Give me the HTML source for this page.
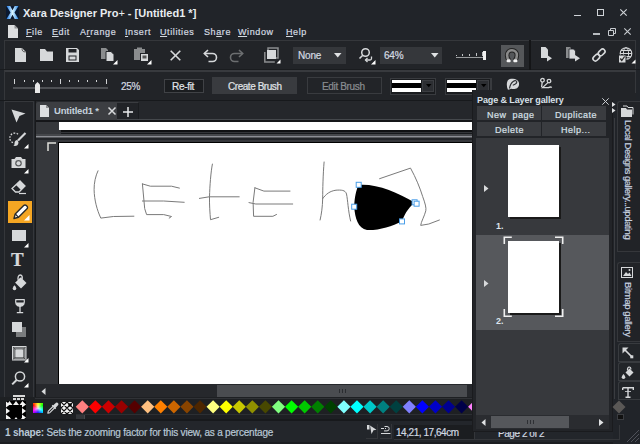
<!DOCTYPE html>
<html><head><meta charset="utf-8">
<style>
*{margin:0;padding:0;box-sizing:border-box}
html,body{width:640px;height:444px;overflow:hidden;background:#212429;font-family:"Liberation Sans",sans-serif;color:#c9d1da}
.a{position:absolute}
.t{position:absolute;white-space:nowrap;line-height:1;-webkit-text-stroke:0.2px currentColor}
.nb{-webkit-text-stroke:0}
b{-webkit-text-stroke:0}
svg{position:absolute;overflow:visible}
</style></head><body>
<svg style="left:6px;top:6px" width="13" height="13" viewBox="0 0 13 13">
<defs><linearGradient id="xg" x1="0" y1="0" x2="1" y2="0"><stop offset="0" stop-color="#1a78e8"/><stop offset="0.5" stop-color="#d8f4ff"/><stop offset="1" stop-color="#2a88e8"/></linearGradient></defs>
<rect x="0" y="0" width="13" height="13" fill="#0a1830"/>
<path d="M0.5 0h3.8l2.2 4.2 2.2-4.2h3.8l-4 6.5 4 6.5h-3.8l-2.2-4.2-2.2 4.2h-3.8l4-6.5z" fill="url(#xg)"/></svg>
<div class="t nb" style="left:23px;top:8px;font-size:11px;font-weight:bold;color:#e8ecf0">Xara Designer Pro<span style="font-weight:normal">+</span> - [Untitled1 *]</div>
<div class="a" style="left:574px;top:15px;width:7px;height:1px;background:#d0d4d8"></div>
<div class="a" style="left:597px;top:9px;width:7px;height:7px;border:1px solid #d0d4d8"></div>
<svg style="left:620px;top:9px" width="7" height="7"><path d="M0.3 0.3L6.7 6.7M6.7 0.3L0.3 6.7" stroke="#d0d4d8" stroke-width="1.1"/></svg>
<svg style="left:8px;top:25px" width="10" height="13" viewBox="0 0 10 13"><path d="M0 0h6.5l3.5 3.5v9.5h-10z" fill="#dcdee0"/><path d="M6.5 0v3.5h3.5z" fill="#8e9092"/></svg><div class="t" style="left:26px;top:28px;font-size:9px;letter-spacing:0.6px;color:#d4dae0"><u>F</u>ile</div><div class="t" style="left:52px;top:28px;font-size:9px;letter-spacing:0.6px;color:#d4dae0"><u>E</u>dit</div><div class="t" style="left:80px;top:28px;font-size:9px;letter-spacing:0.6px;color:#d4dae0">A<u>r</u>range</div><div class="t" style="left:125px;top:28px;font-size:9px;letter-spacing:0.6px;color:#d4dae0"><u>I</u>nsert</div><div class="t" style="left:160px;top:28px;font-size:9px;letter-spacing:0.6px;color:#d4dae0"><u>U</u>tilities</div><div class="t" style="left:204px;top:28px;font-size:9px;letter-spacing:0.6px;color:#d4dae0">Sh<u>a</u>re</div><div class="t" style="left:238px;top:28px;font-size:9px;letter-spacing:0.6px;color:#d4dae0"><u>W</u>indow</div><div class="t" style="left:286px;top:28px;font-size:9px;letter-spacing:0.6px;color:#d4dae0"><u>H</u>elp</div><div class="a" style="left:593px;top:33px;width:7px;height:2px;background:#b8bcc0"></div>
<svg style="left:608px;top:28px" width="8" height="8"><path d="M2.5 2.5v-2h5v5h-2M0.5 2.5h5v5h-5z" fill="none" stroke="#c8ccd0" stroke-width="1"/></svg>
<svg style="left:624px;top:28px" width="7" height="7"><path d="M0.3 0.3L6.7 6.7M6.7 0.3L0.3 6.7" stroke="#c8ccd0" stroke-width="1.1"/></svg>
<div class="a" style="left:4px;top:40px;width:527px;height:29px;background:#222428;border:1px solid #35373b;border-bottom:none"></div><div class="a" style="left:530px;top:40px;width:106px;height:29px;background:#222428;border:1px solid #35373b;border-bottom:none"></div><div class="a" style="left:0;top:69px;width:640px;height:1px;background:#1a1c1f"></div><svg style="left:15px;top:48px" width="11" height="14" viewBox="0 0 11 14"><path d="M0 0h7l4 4v10h-11z" fill="#d6d8da"/><path d="M7 0.3c0 2 0.5 3.7 3.7 3.7" fill="none" stroke="#555" stroke-width="1"/></svg><svg style="left:40px;top:49px" width="13" height="12" viewBox="0 0 13 12"><path d="M0 0h5l2 2.5h6v9.5h-13z" fill="#d6d8da"/></svg><svg style="left:66px;top:48px" width="13" height="14" viewBox="0 0 13 14"><path d="M0 0h11l2 2v12h-13z" fill="#d6d8da"/><rect x="2.5" y="1" width="8" height="3.5" fill="#222428"/><rect x="2.5" y="7.5" width="8" height="5" fill="#222428"/><rect x="3.5" y="8.5" width="6" height="3" fill="#d6d8da"/></svg><svg style="left:101px;top:48px" width="17" height="17" viewBox="0 0 17 17"><path d="M0 0h5l2 2v9h-7z" fill="#8a8c8e"/><path d="M5 3.5h5l3 3v7h-8z" fill="#d6d8da" stroke="#222428" stroke-width="1"/><path d="M16.5 12v4.5h-4.5z" fill="#fff"/></svg><svg style="left:134px;top:47px" width="18" height="18" viewBox="0 0 18 18"><path d="M0 2h3v-1.5h5v1.5h3v11h-11z" fill="#8a8c8e"/><rect x="6.5" y="6.5" width="8" height="8" fill="#d6d8da" stroke="#222428" stroke-width="1"/><rect x="8.5" y="8.5" width="4" height="3" fill="#555"/><path d="M17.5 13v4.5h-4.5z" fill="#fff"/></svg><svg style="left:170px;top:50px" width="11" height="11"><path d="M0.7 0.7L10.3 10.3M10.3 0.7L0.7 10.3" stroke="#d6d8da" stroke-width="1.6"/></svg><svg style="left:203px;top:49px" width="15" height="13" viewBox="0 0 15 13"><path d="M1.5 4.5h8a4 4 0 0 1 0 8h-4" fill="none" stroke="#d6d8da" stroke-width="1.6"/><path d="M5 1L1.3 4.5 5 8" fill="none" stroke="#d6d8da" stroke-width="1.6"/></svg><svg style="left:229px;top:49px" width="15" height="13" viewBox="0 0 15 13"><path d="M13.5 4.5h-8a4 4 0 0 0 0 8h4" fill="none" stroke="#6c6e70" stroke-width="1.6"/><path d="M10 1L13.7 4.5 10 8" fill="none" stroke="#6c6e70" stroke-width="1.6"/></svg><svg style="left:264px;top:47px" width="17" height="17" viewBox="0 0 17 17"><path d="M4 4v-3h10v10h-3" fill="none" stroke="#8a8c8e" stroke-width="1.5"/><path d="M0.8 5v10h10" fill="none" stroke="#8a8c8e" stroke-width="1.5"/><rect x="3" y="3" width="9" height="9" fill="#d6d8da"/><path d="M16.5 12.5v4h-4z" fill="#fff"/></svg><div class="a" style="left:293px;top:47px;width:53px;height:17px;background:#35373b"></div><div class="t" style="left:298px;top:51px;font-size:10px;letter-spacing:-0.2px;color:#d4dae0">None</div><svg style="left:334px;top:53px" width="8" height="5"><path d="M0 0h7.5l-3.75 4.5z" fill="#e0e2e4"/></svg><svg style="left:358px;top:47px" width="18" height="18" viewBox="0 0 18 18"><circle cx="7.5" cy="5.5" r="3.8" fill="none" stroke="#d6d8da" stroke-width="1.5"/><path d="M4.8 8.2L1.5 11.5" stroke="#d6d8da" stroke-width="1.6"/><path d="M13.5 9.5v2a1.5 1.5 0 0 1-1.5 1.5h-4.5" fill="none" stroke="#d6d8da" stroke-width="1.3"/><path d="M9.5 11l-2 2 2 2" fill="none" stroke="#d6d8da" stroke-width="1.3"/><path d="M17.5 13v4.5h-4.5z" fill="#fff"/></svg><div class="a" style="left:380px;top:47px;width:62px;height:17px;background:#35373b"></div><div class="t" style="left:384px;top:51px;font-size:10px;letter-spacing:-0.2px;color:#d4dae0">64%</div><svg style="left:431px;top:53px" width="8" height="5"><path d="M0 0h7.5l-3.75 4.5z" fill="#e0e2e4"/></svg><div class="a" style="left:456px;top:57px;width:29px;height:1px;background:#9a9c9e"></div><div class="a" style="left:456px;top:55px;width:1px;height:1px;background:#c0c2c4"></div><div class="a" style="left:462px;top:54px;width:1px;height:2px;background:#c0c2c4"></div><div class="a" style="left:469px;top:54px;width:1px;height:2px;background:#c0c2c4"></div><div class="a" style="left:476px;top:53px;width:1px;height:3px;background:#c0c2c4"></div><div class="a" style="left:482px;top:52px;width:1px;height:4px;background:#c0c2c4"></div><div class="a" style="left:483px;top:51px;width:3px;height:9px;background:#f0f0f0"></div><div class="a" style="left:501px;top:45px;width:23px;height:22px;background:#55575a"></div><svg style="left:505px;top:48px" width="14" height="16" viewBox="0 0 14 16"><path d="M4.3 12.8C2.6 11 2.1 9.3 2.1 7.2A4.9 4.9 0 0 1 11.9 7.2C11.9 9.3 11.4 11 9.7 12.8" fill="none" stroke="#222" stroke-width="4.6"/><path d="M4.3 12.5C2.6 11 2.1 9.3 2.1 7.2A4.9 4.9 0 0 1 11.9 7.2C11.9 9.3 11.4 11 9.7 12.5" fill="none" stroke="#8a8a8a" stroke-width="2.6"/><rect x="1.6" y="11.6" width="4" height="2.6" rx="0.8" fill="#f4f4f4"/><rect x="8.4" y="11.6" width="4" height="2.6" rx="0.8" fill="#f4f4f4"/></svg><div class="a" style="left:529px;top:40px;width:2px;height:30px;background:#141517"></div><svg style="left:541px;top:47px" width="12" height="15" viewBox="0 0 12 15"><path d="M0 0h4.5l2.5 2.5v8.5h-7z" fill="#d6d8da"/><path d="M6 8l5 3.2-5 3.2z" fill="#d6d8da"/></svg><svg style="left:566px;top:47px" width="15" height="15" viewBox="0 0 15 15"><path d="M0 0h4l1 1v10h-5z" fill="#8a8c8e"/><path d="M3 2h4.5l2 2v8h-6.5z" fill="#d6d8da" stroke="#222428" stroke-width="0.8"/><path d="M9 8l5 3.2-5 3.2z" fill="#d6d8da"/></svg><svg style="left:592px;top:48px" width="14" height="14" viewBox="0 0 14 14"><g transform="rotate(-45 7 7)" fill="none" stroke="#d6d8da" stroke-width="1.6"><rect x="-0.5" y="4.6" width="7.5" height="4.8" rx="2.4"/><rect x="7" y="4.6" width="7.5" height="4.8" rx="2.4"/></g></svg><svg style="left:618px;top:47px" width="18" height="17" viewBox="0 0 18 17"><circle cx="8" cy="6.5" r="5.8" fill="none" stroke="#d6d8da" stroke-width="1.1"/><ellipse cx="8" cy="6.5" rx="2.6" ry="5.8" fill="none" stroke="#d6d8da" stroke-width="1"/><path d="M2.2 6.5h11.6M3 3.5h10M3 9.5h10" stroke="#d6d8da" stroke-width="1"/><rect x="0.5" y="8" width="7.5" height="8" fill="#d6d8da" stroke="#222428" stroke-width="1"/><path d="M2.3 11.5l1.5 2 2.8-4" fill="none" stroke="#222" stroke-width="1.3"/><path d="M17.5 12.5v4h-4z" fill="#fff"/></svg><div class="a" style="left:4px;top:70px;width:632px;height:30px;background:#222428;border:1px solid #35373b;border-top:2px solid #383a3e;border-bottom:none;border-right:none"></div><div class="a" style="left:635px;top:72px;width:1px;height:21px;background:#35373b"></div><div class="a" style="left:13px;top:87px;width:95px;height:2px;background:#4e5054"></div><div class="a" style="left:14px;top:79px;width:1px;height:5px;background:#d0d2d4"></div><div class="a" style="left:24px;top:80px;width:1px;height:2px;background:#d0d2d4"></div><div class="a" style="left:33px;top:80px;width:1px;height:2px;background:#d0d2d4"></div><div class="a" style="left:42px;top:80px;width:1px;height:2px;background:#d0d2d4"></div><div class="a" style="left:51px;top:80px;width:1px;height:2px;background:#d0d2d4"></div><div class="a" style="left:60px;top:79px;width:1px;height:5px;background:#d0d2d4"></div><div class="a" style="left:69px;top:80px;width:1px;height:2px;background:#d0d2d4"></div><div class="a" style="left:78px;top:80px;width:1px;height:2px;background:#d0d2d4"></div><div class="a" style="left:87px;top:80px;width:1px;height:2px;background:#d0d2d4"></div><div class="a" style="left:96px;top:80px;width:1px;height:2px;background:#d0d2d4"></div><div class="a" style="left:106px;top:79px;width:1px;height:5px;background:#d0d2d4"></div><svg style="left:35px;top:82px" width="5" height="11" viewBox="0 0 5 11"><path d="M0 2.5L2.5 0 5 2.5v8.5h-5z" fill="#e8e8e8"/></svg><div class="t" style="left:121px;top:82px;font-size:10px;letter-spacing:-0.3px;color:#d4dae0">25%</div><div class="a" style="left:164px;top:79px;width:40px;height:14px;background:#1b1d20;border:1px solid #404246"></div><div class="t" style="left:172px;top:82px;font-size:10px;letter-spacing:-0.3px;color:#e0e4e8">Re-fit</div><div class="a" style="left:212px;top:77px;width:85px;height:17px;background:#393b3f"></div><div class="t" style="left:228px;top:82px;font-size:10px;letter-spacing:-0.45px;color:#e0e4e8">Create Brush</div><div class="a" style="left:307px;top:77px;width:75px;height:17px;border:1px solid #393b3f"></div><div class="t" style="left:322px;top:82px;font-size:10px;letter-spacing:-0.35px;color:#8a8e92">Edit Brush</div><div class="a" style="left:390px;top:78px;width:46px;height:17px;background:#1a1c1f;border:1px solid #393b3f"></div><div class="a" style="left:392px;top:80px;width:29px;height:12px;background:#fff"></div><div class="a" style="left:392px;top:83px;width:29px;height:5px;background:#000"></div><div class="a" style="left:422px;top:80px;width:12px;height:12px;background:#2c2e32;border:1px solid #3c3e42"></div><svg style="left:426px;top:84px" width="6" height="4"><path d="M0 0h5.5l-2.75 3.2z" fill="#000"/></svg><div class="a" style="left:445px;top:78px;width:46px;height:17px;background:#1a1c1f;border:1px solid #393b3f"></div><div class="a" style="left:447px;top:80px;width:29px;height:12px;background:#fff"></div><div class="a" style="left:447px;top:83px;width:29px;height:5px;background:#000"></div><div class="a" style="left:477px;top:80px;width:12px;height:12px;background:#2c2e32;border:1px solid #3c3e42"></div><svg style="left:481px;top:84px" width="6" height="4"><path d="M0 0h5.5l-2.75 3.2z" fill="#000"/></svg><div class="a" style="left:491px;top:78px;width:1px;height:16px;background:#393b3f"></div><svg style="left:506px;top:78px" width="14" height="12" viewBox="0 0 14 12"><path d="M1.5 3C2.5 1 5 0.5 7 0.7c2.5 0.2 5 1.3 5.8 3.5 0.6 2 0.3 4.5-1.5 5.8-1.5 1-4 1.2-6 0.8-1 0.6-2.5 1-3.5 0.8C0.8 9 0.3 5.5 1.5 3z" fill="#d6d8da"/><path d="M3.5 10.5C4 7 5.5 4.5 7.5 3.2c1.5-1 3.5-0.5 3.3 1-0.3 1.5-2 2.5-4 3" fill="none" stroke="#2a2c30" stroke-width="1.1"/></svg><svg style="left:539px;top:77px" width="16" height="13" viewBox="0 0 16 13"><g fill="none" stroke="#d6d8da" stroke-width="1.3"><circle cx="3.5" cy="3.3" r="1.8"/><circle cx="10" cy="4.1" r="1.8"/><path d="M3.2 5.2L2.6 10.2M8.9 5.6L3.6 10.6H9.5C10.5 10 11.5 9.5 12.8 10.5"/></g><circle cx="3.5" cy="3.3" r="0.7" fill="#111"/></svg><div class="a" style="left:4px;top:101px;width:30px;height:296px;background:#222428;border:1px solid #35373b;border-bottom:none"></div><svg style="left:11px;top:109px" width="15" height="14" viewBox="0 0 15 14"><path d="M0.5 0.5L14.5 4.5 8.5 7 5.5 13.5z" fill="#d6d8da"/></svg><svg style="left:10px;top:132px" width="19" height="17" viewBox="0 0 19 17"><path d="M8 2.2A5 5 0 1 0 4 11" fill="none" stroke="#d6d8da" stroke-width="1.3" stroke-dasharray="1.6 1.4"/><path d="M15.5 1L8 8.5" stroke="#d6d8da" stroke-width="2.2"/><path d="M7.5 8c-2 0-3 1.5-3 3.5s-1 2-1.5 2c2 1 5.5 0.5 5.5-3z" fill="#d6d8da"/><path d="M18.5 12v4.5h-4.5z" fill="#fff"/></svg><svg style="left:11px;top:156px" width="18" height="18" viewBox="0 0 18 18"><path d="M0.5 3h3l1.5-2h5l1.5 2h3v9h-14z" fill="#d6d8da"/><circle cx="7.5" cy="7.3" r="3.3" fill="#5a5c5e"/><circle cx="7.5" cy="7.3" r="2" fill="#d6d8da"/><path d="M17.5 13v4.5h-4.5z" fill="#fff"/></svg><svg style="left:11px;top:180px" width="16" height="15" viewBox="0 0 16 15"><path d="M9 1l5 5-6 6h-3.5l-3.5-3.5z" fill="none" stroke="#d6d8da" stroke-width="1.3"/><path d="M9 1l5 5-4 4-5-5z" fill="#d6d8da"/><path d="M8 13.5h7" stroke="#d6d8da" stroke-width="1.2"/></svg><div class="a" style="left:8px;top:201px;width:24px;height:22px;background:#f5a623"></div><svg style="left:11px;top:203px" width="19" height="18" viewBox="0 0 19 18"><path d="M3 15.5l1.2-4.5 8.5-8.5a1.8 1.8 0 0 1 2.6 0l0.7 0.7a1.8 1.8 0 0 1 0 2.6l-8.5 8.5z" fill="#fff" stroke="#2a2a2a" stroke-width="1.4" stroke-linejoin="round"/><path d="M4.3 11l3.3 3.3" stroke="#2a2a2a" stroke-width="1.2"/><path d="M18.5 12v5.5h-5.5z" fill="#fff"/></svg><svg style="left:12px;top:229px" width="17" height="19" viewBox="0 0 17 19"><rect x="0" y="1" width="14" height="11" fill="#d6d8da"/><path d="M16.5 14v4.5h-4.5z" fill="#fff"/></svg><div class="t" style="left:11px;top:250px;font-family:'Liberation Serif',serif;font-size:19px;font-weight:bold;color:#d6d8da">T</div><svg style="left:12px;top:274px" width="15" height="17" viewBox="0 0 15 17"><path d="M3.5 9L9 3.5 14.5 9 9 14.5z" fill="#d6d8da"/><path d="M3.5 9L9 3.5" stroke="#fff" stroke-width="1"/><path d="M6.2 6.2C5.5 3.5 6.5 1 8.3 1s2.3 2.2 1.8 4" fill="none" stroke="#d6d8da" stroke-width="1.3"/><path d="M2.5 11.3c-1.3 1.6-1.8 2.5-1.8 3.2a1.8 1.8 0 0 0 3.6 0c0-0.7-0.5-1.6-1.8-3.2z" fill="#d6d8da"/></svg><svg style="left:14.5px;top:299px" width="10" height="15" viewBox="0 0 10 15"><path d="M0.8 0.6h8.4c0.6 3.5-0.2 6.3-4.2 6.8-4-0.5-4.8-3.3-4.2-6.8z" fill="none" stroke="#d6d8da" stroke-width="1.2"/><path d="M1 3.6h8c0 1.8-0.8 3.5-4 3.7-3.2-0.2-4-1.9-4-3.7z" fill="#d6d8da"/><path d="M5 7.3v6M1.8 13.7h6.4" stroke="#d6d8da" stroke-width="1.3"/></svg><svg style="left:12px;top:322px" width="15" height="16" viewBox="0 0 15 16"><rect x="4" y="5" width="10" height="10" fill="#7a7c7e"/><rect x="0" y="0" width="10" height="10" fill="#d6d8da"/></svg><svg style="left:12px;top:346px" width="17" height="17" viewBox="0 0 17 17"><rect x="0.5" y="0.5" width="13.5" height="13.5" fill="#7a7c7e" stroke="#d6d8da" stroke-width="1"/><rect x="3.5" y="3.5" width="7.5" height="7.5" fill="#d6d8da"/><path d="M1 1l2.5 2.5M13.5 1L11 3.5M1 13.5l2.5-2.5M13.5 13.5L11 11" stroke="#444" stroke-width="0.8"/><path d="M16.5 12v4.5h-4.5z" fill="#fff"/></svg><svg style="left:11px;top:371px" width="18" height="17" viewBox="0 0 18 17"><circle cx="9" cy="5.5" r="4.6" fill="none" stroke="#d6d8da" stroke-width="1.5"/><path d="M5.6 9L1.2 13.4" stroke="#d6d8da" stroke-width="2"/><path d="M17.5 12v4.5h-4.5z" fill="#fff"/></svg><div class="a" style="left:35px;top:100px;width:437px;height:298px;background:#25272b"></div><div class="a" style="left:35px;top:100px;width:1px;height:298px;background:#18191b"></div><div class="a" style="left:36px;top:102px;width:81px;height:18px;background:#3c3e42;border-radius:2px 0 0 0"></div><svg style="left:40px;top:105px" width="9" height="12" viewBox="0 0 9 12"><path d="M0 0h6l3 3v9h-9z" fill="#dcdee0"/><path d="M6 0v3h3z" fill="#8e9092"/></svg><div class="t nb" style="left:54px;top:106px;font-size:9.5px;font-weight:bold;letter-spacing:-0.2px;color:#c4d0dc">Untitled1 *</div><svg style="left:108px;top:107px" width="8" height="8"><path d="M0.5 0.5L7.5 7.5M7.5 0.5L0.5 7.5" stroke="#d8dadc" stroke-width="1.5"/></svg><div class="a" style="left:117px;top:102px;width:22px;height:17px;background:#212327;border-top:1px solid #3a3c40;border-right:1px solid #1a1c1f"></div><svg style="left:123px;top:107px" width="10" height="10"><path d="M5 0v10M0 5h10" stroke="#e8eaec" stroke-width="1.5"/></svg><div class="a" style="left:0;top:100px;width:472px;height:1px;background:#17191c"></div><div class="a" style="left:117px;top:119px;width:355px;height:1px;background:#45484c"></div><div class="a" style="left:36px;top:120px;width:436px;height:2px;background:#151619"></div><div class="a" style="left:36px;top:122px;width:436px;height:15px;background:#35373b"></div><div class="a" style="left:59px;top:122px;width:413px;height:8px;background:#fff"></div><div class="a" style="left:61px;top:130px;width:411px;height:2px;background:#101113"></div><div class="a" style="left:61px;top:132px;width:411px;height:1px;background:#333539"></div><div class="a" style="left:61px;top:133px;width:411px;height:1px;background:#17191c"></div><div class="a" style="left:36px;top:134px;width:436px;height:2px;background:#45474b"></div><div class="a" style="left:36px;top:136px;width:436px;height:1px;background:#8c8e94"></div><div class="a" style="left:36px;top:137px;width:436px;height:1px;background:#55575b"></div><div class="a" style="left:36px;top:138px;width:436px;height:2px;background:#222428"></div><div class="a" style="left:36px;top:140px;width:436px;height:244px;background:#36383c"></div><svg style="left:47px;top:142px" width="9" height="9"><path d="M1 9V1h8" fill="none" stroke="#e0e0da" stroke-width="1.5"/></svg><div class="a" style="left:58px;top:142px;width:414px;height:242px;background:#fff;border-left:1px solid #000;border-top:1px solid #000"></div><div class="a" style="left:36px;top:384px;width:436px;height:14px;background:#26282c"></div><svg style="left:41px;top:388px" width="5" height="7"><path d="M4.5 0v7l-4-3.5z" fill="#d8dadc"/></svg><div class="a" style="left:217px;top:385px;width:250px;height:12px;background:#4a4c50"></div><div class="a" style="left:339px;top:389px;width:7px;height:4px;background:repeating-linear-gradient(90deg,#2a2c30 0 1px,transparent 1px 3px)"></div><svg style="left:0;top:0" width="640" height="444"><g fill="none" stroke="#7a7a7a" stroke-width="1" stroke-linecap="round" stroke-linejoin="round"><path d="M98 170.8C95.5 176 94 183 94.1 189.7C94.3 200 97 210 100.8 218.1L113.4 216.5L133.9 216.2"/><path d="M142.4 183.9L150.3 186.2L171.5 186.2L179.4 188.1"/><path d="M142.4 183.9L144.7 208.6L146.6 214.6L163.7 214.6L171.5 216.5L169.2 218.1"/><path d="M142.4 201L163.7 201L184.2 202.3"/><path d="M212.4 164.1C210.8 172 209.8 186 209.5 196.8C209.3 205 210 213 210.5 219.7L218.7 217.3"/><path d="M199.4 198.4L209.2 196.8L239.2 196.8"/><path d="M254.9 187.8L263.9 191.1L290 191.1"/><path d="M254.9 187.8L253.1 202.3L253.6 216.3L272.9 216.3L276.5 214.5"/><path d="M249 202.6L255.8 204L292.7 204"/><path d="M324.1 162C323 175 322.7 190 322.7 198C322.5 207 321.5 214 320.1 220"/><path d="M322.7 198.6C326 194 330 191 336 190.2C341 189.8 345.5 190 346.5 194C347.8 200 348 210 350.6 221"/><path d="M379.6 178.7L410.5 168.1C416 178 420 188 422.7 196.6C425 203 426.5 208 425.8 210.8C424.5 216 421 222 420.7 225.4L428.8 224L439.4 220"/></g><path d="M358.7 184.8C377 183.5 397 192 414.6 202.5C407 209 404 216 402 221.4C392 226 379 230.5 367 230C358 228.5 355 218 354.2 206.7C354.5 198 356 190 358.7 184.8z" fill="#000"/><g fill="#fff" stroke="#4a9ee8" stroke-width="1"><rect x="356.2" y="182.3" width="5" height="5"/><rect x="351.7" y="204.2" width="5" height="5"/><rect x="399.5" y="218.9" width="5" height="5"/><rect x="412.1" y="199.8" width="5" height="5"/><rect x="414.1" y="201.2" width="5" height="5"/></g></svg><div class="a" style="left:0;top:397px;width:472px;height:23px;background:#1e2023"></div><div class="a" style="left:35px;top:398px;width:437px;height:1px;background:#303236"></div><div class="a" style="left:13px;top:395px;width:12px;height:2px;background:#d8d8d8"></div><div class="a" style="left:13px;top:398px;width:12px;height:2px;background:repeating-linear-gradient(90deg,#d8d8d8 0 3px,#222 3px 4px)"></div><svg style="left:6px;top:401px" width="20" height="20" viewBox="0 0 20 20"><rect width="20" height="20" fill="#000"/><g fill="#f4f4f4"><path d="M0.5 4L6.5 4L3.5 0z"/><path d="M0.5 20L6.5 20L3.5 16z"/><path d="M0 0.5L0 6.5L4 3.5z"/><path d="M16 0.5L16 6.5L20 3.5z"/><path d="M7 4L13 4L10 0z"/><path d="M7 20L13 20L10 16z"/><path d="M0 7L0 13L4 10z"/><path d="M16 7L16 13L20 10z"/><path d="M13.5 4L19.5 4L16.5 0z"/><path d="M13.5 20L19.5 20L16.5 16z"/><path d="M0 13.5L0 19.5L4 16.5z"/><path d="M16 13.5L16 19.5L20 16.5z"/></g><rect x="4" y="4" width="12" height="12" fill="#000"/></svg><div class="a" style="left:33px;top:402.5px;width:10px;height:10.5px;background:conic-gradient(from 300deg,#ff0000,#ffff00 60deg,#00ff00 120deg,#00ffff 180deg,#0000ff 240deg,#ff00ff 300deg,#ff0000 360deg)"></div><div class="a" style="left:33px;top:402.5px;width:10px;height:10.5px;background:radial-gradient(circle at 50% 50%,rgba(255,255,255,0.85) 0,rgba(255,255,255,0.3) 45%,rgba(255,255,255,0) 75%)"></div><svg style="left:47px;top:402px" width="12" height="12" viewBox="0 0 12 12"><path d="M0.8 11.2L1.3 9.2 6.5 4 8 5.5 2.8 10.7z" fill="none" stroke="#d6d8da" stroke-width="1.1" stroke-linejoin="round"/><path d="M6 3.5L9 0.8a1.6 1.6 0 0 1 2.2 2.2L8.5 6z" fill="#d6d8da"/><path d="M5.2 3.3L8.7 6.8" stroke="#d6d8da" stroke-width="1.3"/></svg><svg style="left:61px;top:402px" width="12" height="12" viewBox="0 0 12 12"><rect width="12" height="12" fill="#f4f4f4"/><g stroke="#111" stroke-width="1.1"><path d="M0 6L6 0M0 12L12 0M6 12L12 6M0 6L6 12M0 0L12 12M6 0L12 6"/></g><circle cx="9" cy="3" r="1.8" fill="#000"/></svg><svg style="left:0;top:0" width="472" height="444"><path d="M75.70 406.8L82.30 400.2L88.90 406.8L82.30 413.40000000000003z" fill="#ff8080"/><path d="M88.78 406.8L95.38 400.2L101.98 406.8L95.38 413.40000000000003z" fill="#ff0000"/><path d="M101.86 406.8L108.46 400.2L115.06 406.8L108.46 413.40000000000003z" fill="#cc0000"/><path d="M114.94 406.8L121.54 400.2L128.14 406.8L121.54 413.40000000000003z" fill="#990000"/><path d="M128.02 406.8L134.62 400.2L141.22 406.8L134.62 413.40000000000003z" fill="#550000"/><path d="M141.10 406.8L147.70 400.2L154.30 406.8L147.70 413.40000000000003z" fill="#ffc080"/><path d="M154.18 406.8L160.78 400.2L167.38 406.8L160.78 413.40000000000003z" fill="#ff8000"/><path d="M167.26 406.8L173.86 400.2L180.46 406.8L173.86 413.40000000000003z" fill="#cc6600"/><path d="M180.34 406.8L186.94 400.2L193.54 406.8L186.94 413.40000000000003z" fill="#884400"/><path d="M193.42 406.8L200.02 400.2L206.62 406.8L200.02 413.40000000000003z" fill="#4d2600"/><path d="M206.50 406.8L213.10 400.2L219.70 406.8L213.10 413.40000000000003z" fill="#ffff80"/><path d="M219.58 406.8L226.18 400.2L232.78 406.8L226.18 413.40000000000003z" fill="#ffff00"/><path d="M232.66 406.8L239.26 400.2L245.86 406.8L239.26 413.40000000000003z" fill="#c8c800"/><path d="M245.74 406.8L252.34 400.2L258.94 406.8L252.34 413.40000000000003z" fill="#909000"/><path d="M258.82 406.8L265.42 400.2L272.02 406.8L265.42 413.40000000000003z" fill="#484800"/><path d="M271.90 406.8L278.50 400.2L285.10 406.8L278.50 413.40000000000003z" fill="#80ff80"/><path d="M284.98 406.8L291.58 400.2L298.18 406.8L291.58 413.40000000000003z" fill="#00ff00"/><path d="M298.06 406.8L304.66 400.2L311.26 406.8L304.66 413.40000000000003z" fill="#00c800"/><path d="M311.14 406.8L317.74 400.2L324.34 406.8L317.74 413.40000000000003z" fill="#008000"/><path d="M324.22 406.8L330.82 400.2L337.42 406.8L330.82 413.40000000000003z" fill="#004000"/><path d="M337.30 406.8L343.90 400.2L350.50 406.8L343.90 413.40000000000003z" fill="#80ffff"/><path d="M350.38 406.8L356.98 400.2L363.58 406.8L356.98 413.40000000000003z" fill="#00ffff"/><path d="M363.46 406.8L370.06 400.2L376.66 406.8L370.06 413.40000000000003z" fill="#00c8c8"/><path d="M376.54 406.8L383.14 400.2L389.74 406.8L383.14 413.40000000000003z" fill="#008080"/><path d="M389.62 406.8L396.22 400.2L402.82 406.8L396.22 413.40000000000003z" fill="#004040"/><path d="M402.70 406.8L409.30 400.2L415.90 406.8L409.30 413.40000000000003z" fill="#8080ff"/><path d="M415.78 406.8L422.38 400.2L428.98 406.8L422.38 413.40000000000003z" fill="#0000ff"/><path d="M428.86 406.8L435.46 400.2L442.06 406.8L435.46 413.40000000000003z" fill="#0000c8"/><path d="M441.94 406.8L448.54 400.2L455.14 406.8L448.54 413.40000000000003z" fill="#000090"/><path d="M455.02 406.8L461.62 400.2L468.22 406.8L461.62 413.40000000000003z" fill="#000048"/><path d="M468.10 406.8L474.70 400.2L481.30 406.8L474.70 413.40000000000003z" fill="#ff80ff"/></svg><div class="a" style="left:76px;top:414px;width:396px;height:6px;background:#1d1f23;border-top:1px solid #2c2f33"></div><div class="a" style="left:76px;top:415px;width:9px;height:5px;background:#33363a;border-right:1px solid #45484c"></div><div class="a" style="left:0;top:420px;width:640px;height:24px;background:#23262b"></div><div class="a" style="left:0;top:419px;width:472px;height:2px;background:#17191c"></div><div class="a" style="left:0;top:442px;width:640px;height:2px;background:#1b1d21"></div><div class="t" style="left:5px;top:428px;font-size:10px;letter-spacing:-0.2px;color:#b9c8d6"><b>1 shape:</b> Sets the zooming factor for this view, as a percentage</div><div class="a" style="left:366px;top:424px;width:12px;height:15px;border-right:1px solid #34363a;border-bottom:1px solid #34363a"></div><div class="a" style="left:380px;top:424px;width:12px;height:15px;border-right:1px solid #34363a;border-bottom:1px solid #34363a"></div><svg style="left:367px;top:425px" width="10" height="10" viewBox="0 0 10 10"><rect x="0" y="0" width="2.5" height="4.5" fill="#d6d8da"/><path d="M3 0.5l6.5 4.3-3 0.4-2 3.8z" fill="#d6d8da"/></svg><svg style="left:381px;top:425px" width="10" height="10" viewBox="0 0 10 10"><path d="M3.5 1.5h2.5a2.2 2.2 0 0 1 0 4.4h-3" fill="none" stroke="#d6d8da" stroke-width="1"/><path d="M0 8.5h9.5" stroke="#d6d8da" stroke-width="1"/><path d="M0 3.5h3M4 3.5h1" stroke="#d6d8da" stroke-width="1"/></svg><div class="a" style="left:394px;top:425px;width:81px;height:15px;background:#1b1d20;border-right:1px solid #34363a;border-bottom:1px solid #34363a"></div><div class="t" style="left:396px;top:428px;font-size:10px;letter-spacing:-0.45px;color:#d0d8e0">14,21, 17,64cm</div><div class="t" style="left:498px;top:429px;font-size:10px;letter-spacing:-0.45px;color:#d0d8e0">Page 2 of 2</div><div class="a" style="left:472px;top:90px;width:141px;height:342px;background:#222428;border:1px solid #1a1b1e;border-top:none;border-right:none"></div><div class="a" style="left:612px;top:100px;width:1px;height:332px;background:#1a1b1e"></div><div class="t nb" style="left:477px;top:96px;font-size:9px;font-weight:bold;letter-spacing:-0.1px;color:#d8e0e8">Page &amp; Layer gallery</div><svg style="left:601.5px;top:97.5px" width="7" height="7"><path d="M0.3 0.3L6.7 6.7M6.7 0.3L0.3 6.7" stroke="#c8ccd0" stroke-width="1"/></svg><div class="a" style="left:477px;top:106px;width:64px;height:14px;background:#3a3c40"></div><div class="t" style="left:487px;top:110.5px;font-size:9px;letter-spacing:0.5px;color:#d8e0e8">New&nbsp; page</div><div class="a" style="left:542px;top:106px;width:64px;height:14px;background:#3a3c40"></div><div class="t" style="left:555px;top:110.5px;font-size:9px;letter-spacing:0.5px;color:#d8e0e8">Duplicate</div><div class="a" style="left:477px;top:122px;width:64px;height:14px;background:#3a3c40"></div><div class="t" style="left:495px;top:125.5px;font-size:9px;letter-spacing:0.5px;color:#d8e0e8">Delete</div><div class="a" style="left:542px;top:122px;width:64px;height:14px;background:#3a3c40"></div><div class="t" style="left:561px;top:125.5px;font-size:9px;letter-spacing:0.5px;color:#d8e0e8">Help...</div><div class="a" style="left:476px;top:138px;width:133px;height:277px;background:#37393d"></div><div class="a" style="left:476px;top:235px;width:133px;height:95px;background:#56585c"></div><div class="a" style="left:510px;top:147px;width:51px;height:72px;background:#1a1a1a"></div><div class="a" style="left:508px;top:145px;width:51px;height:72px;background:#fff"></div><div class="a" style="left:510px;top:243px;width:51px;height:72px;background:#1a1a1a"></div><div class="a" style="left:508px;top:241px;width:51px;height:72px;background:#fff"></div><svg style="left:503px;top:236px" width="61" height="82" viewBox="0 0 61 82"><g fill="none" stroke="#f0f0f0" stroke-width="1.6"><path d="M1.3 8V1.3h7.5M52 1.3h7.7v6.7M1.3 73v7.2h7.5M52 80.2h7.7V73"/></g></svg><svg style="left:484px;top:185px" width="5" height="7"><path d="M0 0v7l4.5-3.5z" fill="#d8dadc"/></svg><svg style="left:484px;top:280px" width="5" height="7"><path d="M0 0v7l4.5-3.5z" fill="#d8dadc"/></svg><div class="t nb" style="left:496px;top:222px;font-size:9px;font-weight:bold;color:#dce4ec">1.</div><div class="t nb" style="left:496px;top:317px;font-size:9px;font-weight:bold;color:#dce4ec">2.</div><div class="a" style="left:476px;top:415px;width:133px;height:14px;background:#2a2c30"></div><svg style="left:481px;top:419px" width="5" height="7"><path d="M4.5 0v7l-4-3.5z" fill="#e0e2e4"/></svg><svg style="left:599px;top:419px" width="5" height="7"><path d="M0 0v7l4.5-3.5z" fill="#e0e2e4"/></svg><div class="a" style="left:491px;top:416px;width:78px;height:12px;background:#55575b"></div><div class="a" style="left:527px;top:420px;width:7px;height:4px;background:repeating-linear-gradient(90deg,#2e3034 0 1px,transparent 1px 3px)"></div><div class="a" style="left:613px;top:100px;width:27px;height:344px;background:#212429"></div><div class="a" style="left:614px;top:118px;width:1px;height:281px;background:#3a3c40"></div><svg style="left:612px;top:102px" width="4" height="5"><path d="M0 0v5l3.5-2.5z" fill="#e0e2e4"/></svg><svg style="left:612px;top:108px" width="4" height="5"><path d="M0 0v5l3.5-2.5z" fill="#e0e2e4"/></svg><div class="a" style="left:617px;top:101px;width:23px;height:151px;background:#212327;border:1px solid #35373b;border-right:none;border-radius:3px 0 0 0"></div><svg style="left:621px;top:106px" width="13" height="11" viewBox="0 0 13 11"><path d="M0 2h5l1 1.5h5v7.5h-11z" fill="#d6d8da"/><path d="M2 0h4l1 1.5h5v7" fill="none" stroke="#d6d8da" stroke-width="1"/></svg><div class="t" style="left:622px;top:120px;font-size:9.6px;letter-spacing:-0.5px;color:#c8d4e0;transform-origin:0 0;transform:translate(10.5px,0) rotate(90deg)">Local Designs gallery...updating</div><div class="a" style="left:617px;top:262px;width:23px;height:80px;background:#212327;border:1px solid #35373b;border-right:none;border-radius:3px 0 0 0"></div><svg style="left:621px;top:267px" width="12" height="11" viewBox="0 0 12 11"><rect x="0.5" y="0.5" width="11" height="10" fill="none" stroke="#d6d8da" stroke-width="1"/><path d="M2 9l3-4 2 2 1.5-1.5 2 3.5z" fill="#d6d8da"/><circle cx="8.5" cy="3" r="1" fill="#d6d8da"/></svg><div class="t" style="left:622px;top:282px;font-size:9.6px;letter-spacing:-0.45px;color:#c8d4e0;transform-origin:0 0;transform:translate(10.5px,0) rotate(90deg)">Bitmap gallery</div><div class="a" style="left:618px;top:343px;width:22px;height:19px;background:#222529;border:1px solid #383b3f;border-right:none;border-radius:3px 0 0 0"></div><div class="a" style="left:618px;top:362px;width:22px;height:19px;background:#222529;border:1px solid #383b3f;border-right:none;border-radius:3px 0 0 0"></div><div class="a" style="left:618px;top:381px;width:22px;height:19px;background:#222529;border:1px solid #383b3f;border-right:none;border-radius:3px 0 0 0"></div><svg style="left:622px;top:347px" width="12" height="12" viewBox="0 0 12 12"><path d="M2.5 2.5L10 10" stroke="#d6d8da" stroke-width="1.7"/><path d="M0.5 0.5h6l-6 6z" fill="#d6d8da"/><rect x="8.3" y="8.3" width="3" height="3" fill="#d6d8da"/></svg><svg style="left:621px;top:366px" width="13" height="13" viewBox="0 0 13 13"><path d="M4.5 6.5L8.5 2.5 12.5 6.5 8.5 10.5z" fill="#d6d8da"/><path d="M6.5 4.5C6.3 2.5 7 1 8.2 1s1.8 1.2 1.6 2.5" fill="none" stroke="#d6d8da" stroke-width="1.2"/><path d="M2.5 8c-1.3 1.6-1.8 2.5-1.8 3.2a1.8 1.8 0 0 0 3.6 0c0-0.7-0.5-1.6-1.8-3.2z" fill="#d6d8da"/></svg><svg style="left:622px;top:387px" width="12" height="11" viewBox="0 0 12 11"><path d="M0.7 0.7h10.6v2.2M0.7 0.7v2.2M6 0.7v9.6M3.5 10.3h5" fill="none" stroke="#d6d8da" stroke-width="1.4"/><path d="M3 4.5h6" stroke="#d6d8da" stroke-width="0.8"/></svg><svg style="left:612px;top:400px" width="15" height="15"><path d="M0.5 7L7 0.5 13.5 7 7 13.5z" fill="#5a5856"/></svg><div class="a" style="left:617px;top:414px;width:7px;height:6px;background:#111;border:1px solid #3a3c40"></div><div class="a" style="left:474px;top:425px;width:146px;height:15px;border-right:1px solid #34363a;border-bottom:1px solid #34363a"></div><svg style="left:626px;top:429px" width="14" height="14"><path d="M13 1L1 13M13 5L5 13M13 9L9 13" stroke="#50525a" stroke-width="1"/></svg></body></html>
